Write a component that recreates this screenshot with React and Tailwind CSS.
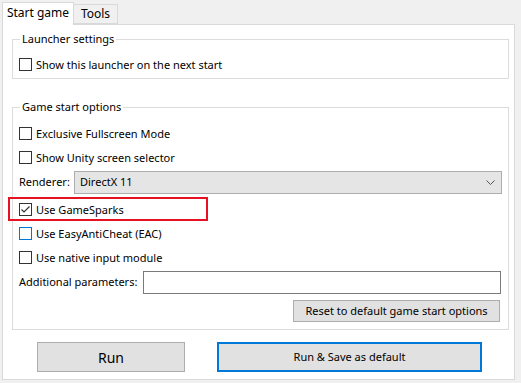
import React from 'react'

function Box({ checked, blue }) {
  return (
    <span
      className={`w-[13px] h-[13px] shrink-0 border bg-white flex items-center justify-center ${blue ? 'border-[#0078d7]' : 'border-[#333333]'}`}
    >
      {checked && (
        <svg width="11" height="11" viewBox="0 0 11 11">
          <path d="M1.5 5.5 L4 8 L9.5 2.5" fill="none" stroke="#333" strokeWidth="1.2" />
        </svg>
      )}
    </span>
  )
}

function Check({ label, checked, blue, className = '' }) {
  return (
    <div className={`flex items-center gap-[4px] h-[13px] ${className}`}>
      <Box checked={checked} blue={blue} />
      <span className="leading-none whitespace-nowrap">{label}</span>
    </div>
  )
}

export default function App() {
  return (
    <div
      className="w-[521px] h-[383px] bg-[#f0f0f0] pt-[2px] pl-[2px] text-[11px] text-black"
      style={{ fontFamily: '"Segoe UI", "Noto Sans", sans-serif' }}
    >
      {/* tabs */}
      <div className="flex items-end h-[22px]">
        <div className="relative z-10 -mb-px h-[23px] w-[72px] bg-white border border-b-0 border-[#d9d9d9] flex items-center justify-center pb-[2px] text-[12px]">
          Start game
        </div>
        <div className="h-[20px] w-[44px] border border-l-0 border-[#d9d9d9] bg-[#f0f0f0] flex items-center justify-center text-[12px]">
          Tools
        </div>
      </div>

      {/* panel */}
      <div className="w-[513px] h-[356px] bg-white border border-[#d9d9d9] px-[9px] pt-[6px]">
        <fieldset className="w-[497px] h-[48px] border border-[#dcdcdc] px-[6px]">
          <legend className="px-[2px] ml-[1px] leading-[16px]">Launcher settings</legend>
          <Check className="mt-[11px]" label="Show this launcher on the next start" />
        </fieldset>

        <fieldset className="mt-[20px] w-[497px] h-[231px] border border-[#dcdcdc] px-[6px]">
          <legend className="px-[2px] ml-[1px] leading-[16px]">Game start options</legend>
          <Check className="mt-[12px]" label="Exclusive Fullscreen Mode" />
          <Check className="mt-[11px]" label="Show Unity screen selector" />

          <div className="mt-[7px] flex items-center">
            <span className="w-[55px] whitespace-nowrap">Renderer:</span>
            <div className="w-[428px] h-[23px] bg-[#e5e5e5] border border-[#adadad] flex items-center justify-between pl-[5px] pr-[6px]">
              <span>DirectX 11</span>
              <svg width="9" height="6" viewBox="0 0 9 6">
                <path d="M0.5 0.5 L4.5 4.5 L8.5 0.5" fill="none" stroke="#555" strokeWidth="1" />
              </svg>
            </div>
          </div>

          <div className="mt-[3px] -ml-[11px] w-[200px] h-[24px] border-2 border-[#e81123] flex items-center pl-[9px]">
            <Check checked label="Use GameSparks" />
          </div>
          <Check className="mt-[6px]" blue label="Use EasyAntiCheat (EAC)" />
          <Check className="mt-[11px]" label="Use native input module" />

          <div className="mt-[7px] flex items-center">
            <span className="w-[124px] whitespace-nowrap">Additional parameters:</span>
            <div className="w-[358px] h-[23px] bg-white border border-[#7a7a7a]" />
          </div>

          <div className="mt-[6px] flex justify-end pr-[2px]">
            <button className="w-[207px] h-[22px] bg-[#e1e1e1] border border-[#adadad] whitespace-nowrap">
              Reset to default game start options
            </button>
          </div>
        </fieldset>

        <div className="mt-[12px] flex items-center pl-[25px] gap-[32px]">
          <button className="w-[148px] h-[30px] bg-[#e1e1e1] border border-[#adadad] text-[14px]">
            Run
          </button>
          <button className="w-[265px] h-[30px] bg-[#e1e1e1] border-2 border-[#0078d7]">
            Run &amp; Save as default
          </button>
        </div>
      </div>
    </div>
  )
}
